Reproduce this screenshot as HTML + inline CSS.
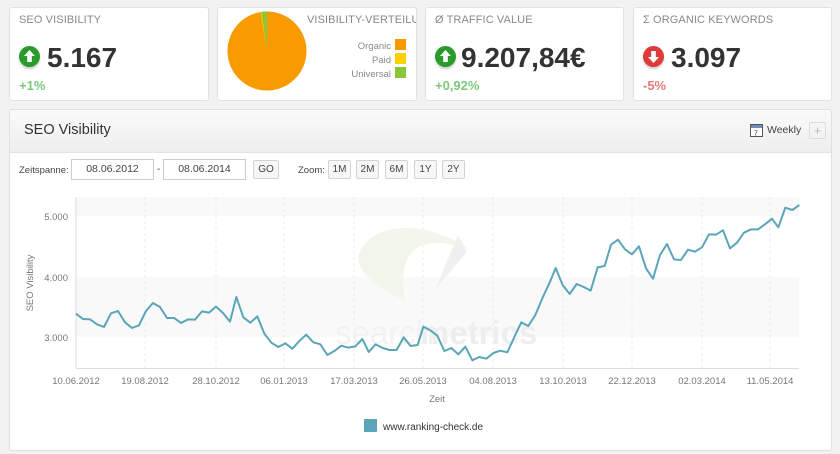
<!DOCTYPE html>
<html><head><meta charset="utf-8"><style>
*{margin:0;padding:0;box-sizing:border-box}
body{width:840px;height:454px;background:#f2f2f2;font-family:"Liberation Sans",sans-serif;position:relative;overflow:hidden}
.card{position:absolute;top:7px;height:94px;background:#fff;border:1px solid #e2e2e2;border-radius:3px}
.t{position:absolute;left:9px;top:6px;font-size:11px;color:#888;letter-spacing:.1px}
.big{position:absolute;left:42px;top:34px;font-size:28px;font-weight:bold;color:#333}
.ic{position:absolute;left:9px;top:38px;width:21px;height:21px;border-radius:50%;box-shadow:0 2px 2px #ccc}
.ics{position:absolute;left:9px;top:38px}
.pc{position:absolute;left:9px;top:70px;font-size:13px;font-weight:bold}
.panel{position:absolute;left:9px;top:109px;width:823px;height:342px;background:#fff;border:1px solid #e0e0e0;border-radius:3px}
.ph{height:43px;background:linear-gradient(#fafafa,#eee);border-bottom:1px solid #e4e4e4;border-radius:3px 3px 0 0}
.btn{position:absolute;top:160px;height:19px;border:1px solid #d3d3d3;border-radius:2px;background:#f7f7f7;font-size:10px;color:#444;text-align:center;line-height:17px}
.in{position:absolute;top:159px;height:21px;border:1px solid #ccc;background:#fff;font-size:10.5px;color:#444;text-align:center;line-height:19px}
.lbl{font-size:9.5px;fill:#777;font-family:"Liberation Sans",sans-serif}
</style></head><body>
<div class="card" style="left:9px;width:200px"><div class="t">SEO VISIBILITY</div>
<div class="ic" style="background:#2a9a2a"></div><svg class="ics" width="21" height="21"><path d="M10.5 4 L16 10 H12.8 V16 H8.2 V10 H5 Z" fill="#fff"/></svg>
<div class="big" style="left:37px">5.167</div><div class="pc" style="color:#7ac97a">+1%</div></div>
<div class="card" style="left:217px;width:200px;overflow:hidden">
<svg style="position:absolute;left:0;top:0" width="200" height="94"><circle cx="49" cy="43" r="39.5" fill="#f99a00"/><path d="M49 43 L49 3.5 A39.5 39.5 0 0 0 43.5 3.9 Z" fill="#8ac63a"/><path d="M49 43 L43.5 3.9 A39.5 39.5 0 0 0 42.5 4.1 Z" fill="#ffd000"/></svg>
<div class="t" style="left:89px;white-space:nowrap">VISIBILITY-VERTEILU</div>
<div style="position:absolute;right:25px;top:32px;font-size:9.5px;color:#888;text-align:right;line-height:14px">Organic<br>Paid<br>Universal</div>
<div style="position:absolute;left:177px;top:31px;width:11px;height:11px;background:#f99a00"></div>
<div style="position:absolute;left:177px;top:45px;width:11px;height:11px;background:#ffd000"></div>
<div style="position:absolute;left:177px;top:59px;width:11px;height:11px;background:#8ac63a"></div></div>
<div class="card" style="left:425px;width:199px"><div class="t">Ø TRAFFIC VALUE</div>
<div class="ic" style="background:#2a9a2a"></div><svg class="ics" width="21" height="21"><path d="M10.5 4 L16 10 H12.8 V16 H8.2 V10 H5 Z" fill="#fff"/></svg>
<div class="big" style="left:35px">9.207,84€</div><div class="pc" style="color:#7ac97a">+0,92%</div></div>
<div class="card" style="left:633px;width:199px"><div class="t">Σ ORGANIC KEYWORDS</div>
<div class="ic" style="background:#dd3b3b"></div><svg class="ics" width="21" height="21"><path d="M10.5 17 L16 11 H12.8 V5 H8.2 V11 H5 Z" fill="#fff"/></svg>
<div class="big" style="left:37px">3.097</div><div class="pc" style="color:#e87a7a">-5%</div></div>
<div class="panel"><div class="ph"><div style="position:absolute;left:14px;top:12px;font-size:14.5px;color:#333">SEO Visibility</div>
<svg style="position:absolute;left:740px;top:14px" width="13" height="13"><rect x=".5" y=".5" width="12" height="12" fill="#fff" stroke="#555"/><rect x="1" y="1" width="11" height="3" fill="#6a8fb0"/><text x="4" y="11.5" font-size="7" fill="#333">7</text></svg>
<div style="position:absolute;left:757px;top:14px;font-size:10.5px;color:#444">Weekly</div>
<div style="position:absolute;left:799px;top:12px;width:17px;height:17px;border:1px solid #ddd;border-radius:2px;color:#bbb;text-align:center;line-height:15px;font-size:13px">+</div></div></div>
<div style="position:absolute;left:19px;top:165px;font-size:9.5px;color:#444">Zeitspanne:</div>
<div class="in" style="left:71px;width:83px">08.06.2012</div>
<div style="position:absolute;left:157px;top:164px;font-size:10px;color:#444">-</div>
<div class="in" style="left:163px;width:83px">08.06.2014</div>
<div class="btn" style="left:253px;width:26px">GO</div>
<div style="position:absolute;left:298px;top:165px;font-size:9.5px;color:#444">Zoom:</div>
<div class="btn" style="left:328px;width:23px">1M</div>
<div class="btn" style="left:356px;width:23px">2M</div>
<div class="btn" style="left:385px;width:23px">6M</div>
<div class="btn" style="left:414px;width:23px">1Y</div>
<div class="btn" style="left:442px;width:23px">2Y</div>
<svg style="position:absolute;left:0;top:0" width="840" height="454">
<rect x="76" y="197" width="723" height="19" fill="#f9f9f9"/><rect x="76" y="277" width="723" height="60" fill="#f9f9f9"/>
<g stroke="#ececec" stroke-dasharray="3,3"><line x1="145" y1="197" x2="145" y2="368"/><line x1="216" y1="197" x2="216" y2="368"/><line x1="284" y1="197" x2="284" y2="368"/><line x1="354" y1="197" x2="354" y2="368"/><line x1="423" y1="197" x2="423" y2="368"/><line x1="493" y1="197" x2="493" y2="368"/><line x1="563" y1="197" x2="563" y2="368"/><line x1="632" y1="197" x2="632" y2="368"/><line x1="702" y1="197" x2="702" y2="368"/><line x1="770" y1="197" x2="770" y2="368"/></g>
<line x1="76" y1="197" x2="76" y2="368" stroke="#ddd"/><line x1="76" y1="368.5" x2="799" y2="368.5" stroke="#ddd"/>
<path d="M358 258 C365 225 420 215 470 250 C430 235 395 240 405 300 C380 290 360 275 358 258 Z" fill="#f1f5ea"/>
<path d="M458 235 L467 252 L435 290 Z" fill="#f0f0f0"/>
<text x="335" y="344" font-size="33" fill="#f2f2f2" font-family="Liberation Sans">search</text><text x="420" y="344" font-size="33" fill="#eeeeee" font-weight="bold" font-family="Liberation Sans">metrics</text>
<g class="lbl" text-anchor="end"><text x="68" y="220">5.000</text><text x="68" y="281">4.000</text><text x="68" y="341">3.000</text></g>
<g class="lbl" text-anchor="middle"><text x="76" y="384">10.06.2012</text><text x="145" y="384">19.08.2012</text><text x="216" y="384">28.10.2012</text><text x="284" y="384">06.01.2013</text><text x="354" y="384">17.03.2013</text><text x="423" y="384">26.05.2013</text><text x="493" y="384">04.08.2013</text><text x="563" y="384">13.10.2013</text><text x="632" y="384">22.12.2013</text><text x="702" y="384">02.03.2014</text><text x="770" y="384">11.05.2014</text><text x="437" y="402">Zeit</text></g>
<text class="lbl" transform="translate(33,283) rotate(-90)" text-anchor="middle">SEO Visibility</text>
<g transform="translate(0,190) scale(0.33333)"><polyline fill="none" stroke="#5aa5b8" stroke-width="6" stroke-linejoin="round" points="228,371 249,387 270,388 291,403 312,411 333,370 354,363 375,397 396,414 417,406 438,363 459,339 480,351 501,384 522,384 543,399 564,388 585,389 606,364 627,368 648,350 669,369 690,395 709,321 730,382 751,398 772,379 793,431 814,458 835,471 856,460 877,476 898,453 919,434 940,457 961,463 982,495 1003,483 1024,467 1045,473 1066,469 1087,447 1106,486 1127,463 1148,474 1169,480 1190,480 1211,442 1232,468 1253,465 1270,410 1291,421 1312,437 1333,483 1354,474 1375,493 1396,470 1417,511 1438,501 1459,506 1480,489 1501,482 1522,487 1543,441 1564,397 1585,408 1606,375 1627,325 1648,280 1667,234 1688,285 1709,312 1730,282 1751,291 1772,302 1793,232 1814,228 1833,164 1854,149 1875,178 1896,193 1917,169 1938,235 1959,266 1980,195 2001,162 2022,208 2043,210 2064,179 2085,185 2106,172 2127,133 2148,134 2169,121 2190,175 2211,158 2232,128 2253,118 2274,118 2295,103 2316,86 2335,112 2356,53 2377,60 2398,45"/></g>
<rect x="364" y="419" width="13" height="13" fill="#5aa5b8"/><text x="383" y="430" font-size="10" fill="#333" font-family="Liberation Sans">www.ranking-check.de</text>
</svg>
</body></html>
